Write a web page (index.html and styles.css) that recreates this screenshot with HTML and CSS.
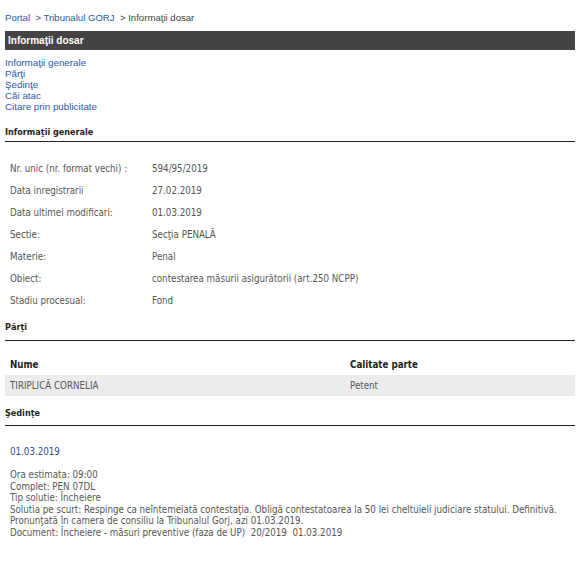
FILE: index.html
```html
<!DOCTYPE html>
<html lang="ro">
<head>
<meta charset="utf-8">
<title>Informaţii dosar</title>
<link rel="stylesheet" href="styles.css">
</head>
<body>
<div class="page">
  <div class="crumbs"><a href="#">Portal</a> &nbsp;&gt; <a href="#">Tribunalul GORJ</a> &nbsp;&gt; Informaţii dosar</div>
  <div class="bar">Informaţii dosar</div>
  <ul class="nav">
    <li><a href="#">Informaţii generale</a></li>
    <li><a href="#">Părţi</a></li>
    <li><a href="#">Şedinţe</a></li>
    <li><a href="#">Căi atac</a></li>
    <li><a href="#">Citare prin publicitate</a></li>
  </ul>

  <h2 class="sec sec-gen">Informaţii generale</h2>
  <div class="info">
    <div class="lbl">Nr. unic (nr. format vechi) :</div><div class="val">594/95/2019</div>
    <div class="lbl">Data inregistrarii</div><div class="val">27.02.2019</div>
    <div class="lbl">Data ultimei modificari:</div><div class="val">01.03.2019</div>
    <div class="lbl">Sectie:</div><div class="val">Secţia PENALĂ</div>
    <div class="lbl">Materie:</div><div class="val">Penal</div>
    <div class="lbl">Obiect:</div><div class="val">contestarea măsurii asigurătorii (art.250 NCPP)</div>
    <div class="lbl">Stadiu procesual:</div><div class="val">Fond</div>
  </div>

  <h2 class="sec sec-parti">Părţi</h2>
  <div class="parti">
    <div class="prow phead"><div>Nume</div><div>Calitate parte</div></div>
    <div class="prow pdata"><div>TIRIPLICĂ CORNELIA</div><div>Petent</div></div>
  </div>

  <h2 class="sec sec-sed">Şedinţe</h2>
  <div class="sed">
    <div class="date">01.03.2019</div>
    <div class="details">
      <div>Ora estimata: 09:00</div>
      <div>Complet: PEN 07DL</div>
      <div>Tip solutie: Încheiere</div>
      <div>Solutia pe scurt: Respinge ca neîntemeiată contestaţia. Obligă contestatoarea la 50 lei cheltuieli judiciare statului. Definitivă.</div>
      <div>Pronunţată în camera de consiliu la Tribunalul Gorj, azi 01.03.2019.</div>
      <div>Document: Încheiere - măsuri preventive (faza de UP)&nbsp; 20/2019&nbsp; 01.03.2019</div>
    </div>
  </div>
</div>
</body>
</html>
```
FILE: styles.css
```css
html, body {
  margin: 0;
  padding: 0;
  background: #fff;
}
.page {
  padding: 12px 5px 0 5px;
  font-family: "DejaVu Sans Condensed", "DejaVu Sans", sans-serif;
  font-size: 9.7px;
  color: #555;
}
a {
  color: #2b5aa6;
  text-decoration: none;
}
.crumbs {
  font-family: "Liberation Sans", Arial, sans-serif;
  font-size: 9.6px;
  line-height: 12px;
  color: #444;
}
.bar {
  margin-top: 7px;
  height: 19px;
  line-height: 19px;
  background: #454344;
  color: #fff;
  font-family: "Liberation Sans", Arial, sans-serif;
  font-weight: bold;
  font-size: 10px;
  padding-left: 3px;
}
.nav {
  list-style: none;
  margin: 7px 0 0 0;
  padding: 0;
  font-family: "Liberation Sans", Arial, sans-serif;
  font-size: 9.8px;
  line-height: 11px;
}
.sec {
  margin: 0;
  font-size: 9px;
  font-weight: bold;
  color: #222;
  border-bottom: 1px solid #222;
  line-height: 12px;
  padding-bottom: 3px;
}
.sec-gen { margin-top: 14px; }
.info {
  display: grid;
  grid-template-columns: 142px 1fr;
  grid-auto-rows: 22px;
  padding: 16px 0 0 5px;
  line-height: 22px;
}
.sec-parti {
  margin-top: 9px;
  padding-bottom: 7px;
}
.parti {
  padding-top: 13px;
}
.prow {
  display: grid;
  grid-template-columns: 340px 1fr;
  height: 21px;
  line-height: 21px;
  padding-left: 5px;
}
.phead {
  font-weight: bold;
  color: #222;
}
.pdata {
  background: #ececec;
}
.sec-sed {
  margin-top: 11px;
  padding-bottom: 6px;
}
.sed {
  padding: 20px 0 0 5px;
}
.date {
  color: #1f4f94;
  font-size: 9.7px;
  line-height: 12px;
}
.details {
  margin-top: 11px;
  line-height: 11.6px;
}
```
